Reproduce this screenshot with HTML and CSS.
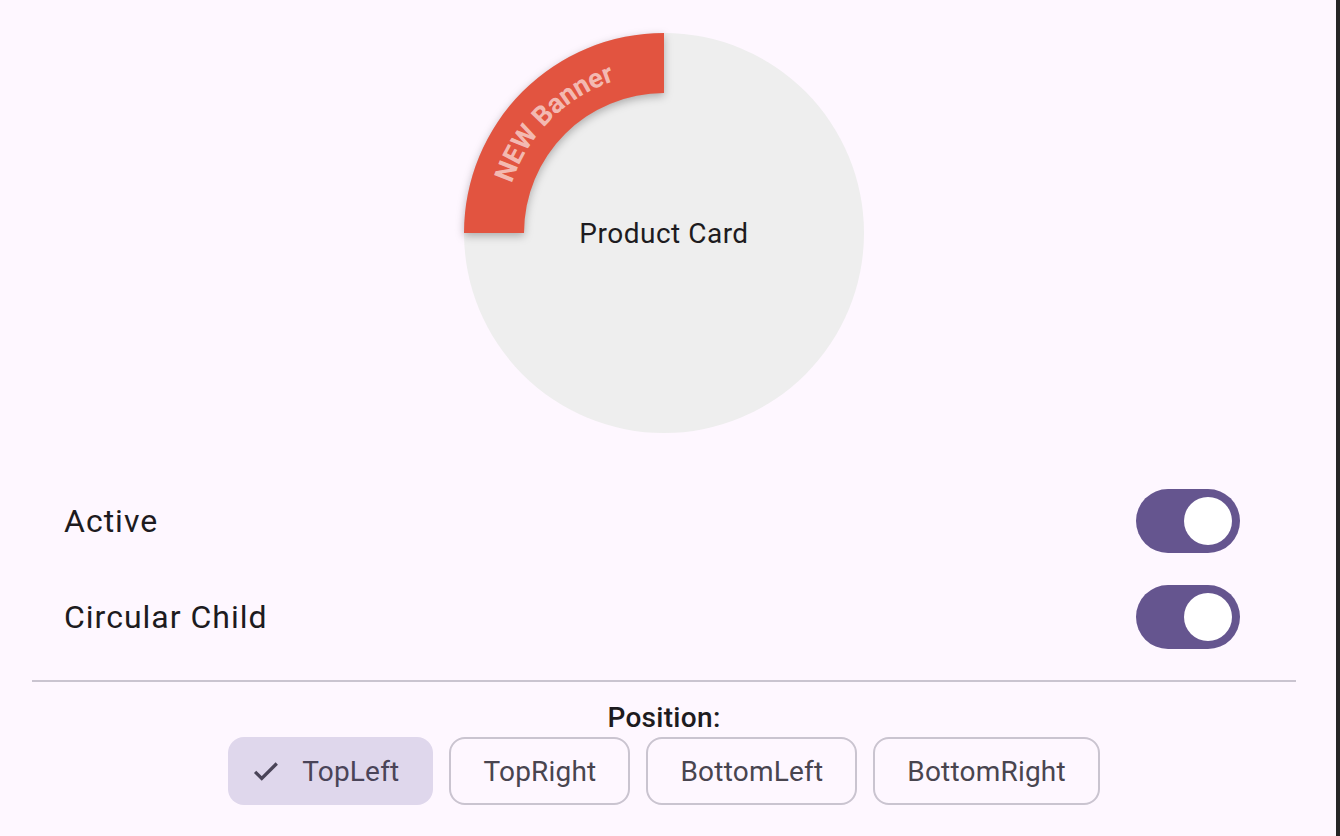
FILE: index.html
```html
<!DOCTYPE html>
<html lang="en">
<head>
<meta charset="utf-8">
<title>Circular Banner</title>
<link rel="stylesheet" href="styles.css">
</head>
<body>
<div class="page">
  <main class="main">
    <section class="hero">
      <div class="card">
        <svg class="banner" width="400" height="400" viewBox="0 0 400 400">
          <defs>
            <path id="textArc" d="M 40 200 A 160 160 0 0 1 200 40"/>
          </defs>
          <path class="band" d="M 0 200 A 200 200 0 0 1 200 0 L 200 60 A 140 140 0 0 0 60 200 Z"/>
          <text class="banner-text"><textPath href="#textArc" startOffset="50%" text-anchor="middle">NEW Banner</textPath></text>
        </svg>
        <span class="card-label">Product Card</span>
      </div>
    </section>

    <section class="tiles">
      <div class="tile">
        <span class="tile-label">Active</span>
        <span class="switch"><span class="thumb"></span></span>
      </div>
      <div class="tile">
        <span class="tile-label">Circular Child</span>
        <span class="switch"><span class="thumb"></span></span>
      </div>
    </section>

    <hr class="divider">

    <section class="position">
      <div class="position-title">Position:</div>
      <div class="chips">
        <span class="chip selected">
          <svg class="check" width="34" height="34" viewBox="0 0 24 24"><path d="M4.3 12.6L9 17.3 19.6 6.7"/></svg>
          <span>TopLeft</span>
        </span>
        <span class="chip">TopRight</span>
        <span class="chip">BottomLeft</span>
        <span class="chip">BottomRight</span>
      </div>
    </section>
  </main>
  <div class="edge"></div>
</div>
</body>
</html>
```
FILE: styles.css
```css
* { box-sizing: border-box; }

html, body {
  margin: 0;
  padding: 0;
  background: #fef7ff;
  font-family: Roboto, "Noto Sans", "Liberation Sans", sans-serif;
  color: #1d1b20;
}

.page {
  display: flex;
  width: 1340px;
  height: 836px;
  overflow: hidden;
}

.main {
  flex: 1;
  padding: 33px 40px 0 32px;
  display: flex;
  flex-direction: column;
}

.edge {
  width: 4px;
  background: #262626;
}

.hero {
  display: flex;
  justify-content: center;
}

.card {
  position: relative;
  width: 400px;
  height: 400px;
  border-radius: 50%;
  background: #eeeeee;
  display: flex;
  align-items: center;
  justify-content: center;
}

.banner {
  position: absolute;
  left: 0;
  top: 0;
  overflow: visible;
}

.band {
  fill: #e25440;
  filter: drop-shadow(0 3px 4px rgba(0, 0, 0, 0.28));
}

.banner-text {
  fill: rgba(255, 255, 255, 0.62);
  font-family: Roboto, "Noto Sans", sans-serif;
  font-weight: 700;
  font-size: 27px;
}

.card-label {
  position: relative;
  top: 1px;
  font-size: 28px;
  letter-spacing: 0.5px;
  line-height: 32px;
  color: #1d1b20;
}

.tiles {
  margin-top: 40px;
  display: flex;
  flex-direction: column;
}

.tile {
  height: 96px;
  display: flex;
  align-items: center;
  justify-content: space-between;
  padding: 0 56px 0 32px;
}

.tile-label {
  font-size: 32px;
  letter-spacing: 1px;
  line-height: 48px;
  color: #1d1b20;
}

.switch {
  width: 104px;
  height: 64px;
  border-radius: 32px;
  background: #65558f;
  display: flex;
  align-items: center;
  justify-content: flex-end;
  padding-right: 8px;
}

.thumb {
  width: 48px;
  height: 48px;
  border-radius: 50%;
  background: #ffffff;
}

.divider {
  margin: 15px 0 0 0;
  border: 0;
  height: 2px;
  background: #cac4d0;
}

.position {
  display: flex;
  flex-direction: column;
  align-items: center;
}

.position-title {
  margin-top: 20px;
  font-size: 28px;
  font-weight: 500;
  letter-spacing: 0.3px;
  line-height: 32px;
  color: #1d1b20;
}

.chips {
  margin-top: 3px;
  display: flex;
  gap: 16px;
}

.chip {
  height: 68px;
  border: 2px solid #cac4d0;
  border-radius: 16px;
  padding: 0 32px;
  display: flex;
  align-items: center;
  font-size: 28px;
  letter-spacing: 0.2px;
  color: #49454f;
}

.chip.selected {
  border-color: transparent;
  background: #dfd7ec;
  padding: 0 32px 0 19px;
  gap: 19px;
  color: #4a4458;
}

.check {
  fill: none;
  stroke: #4a4458;
  stroke-width: 2.3;
}
```
